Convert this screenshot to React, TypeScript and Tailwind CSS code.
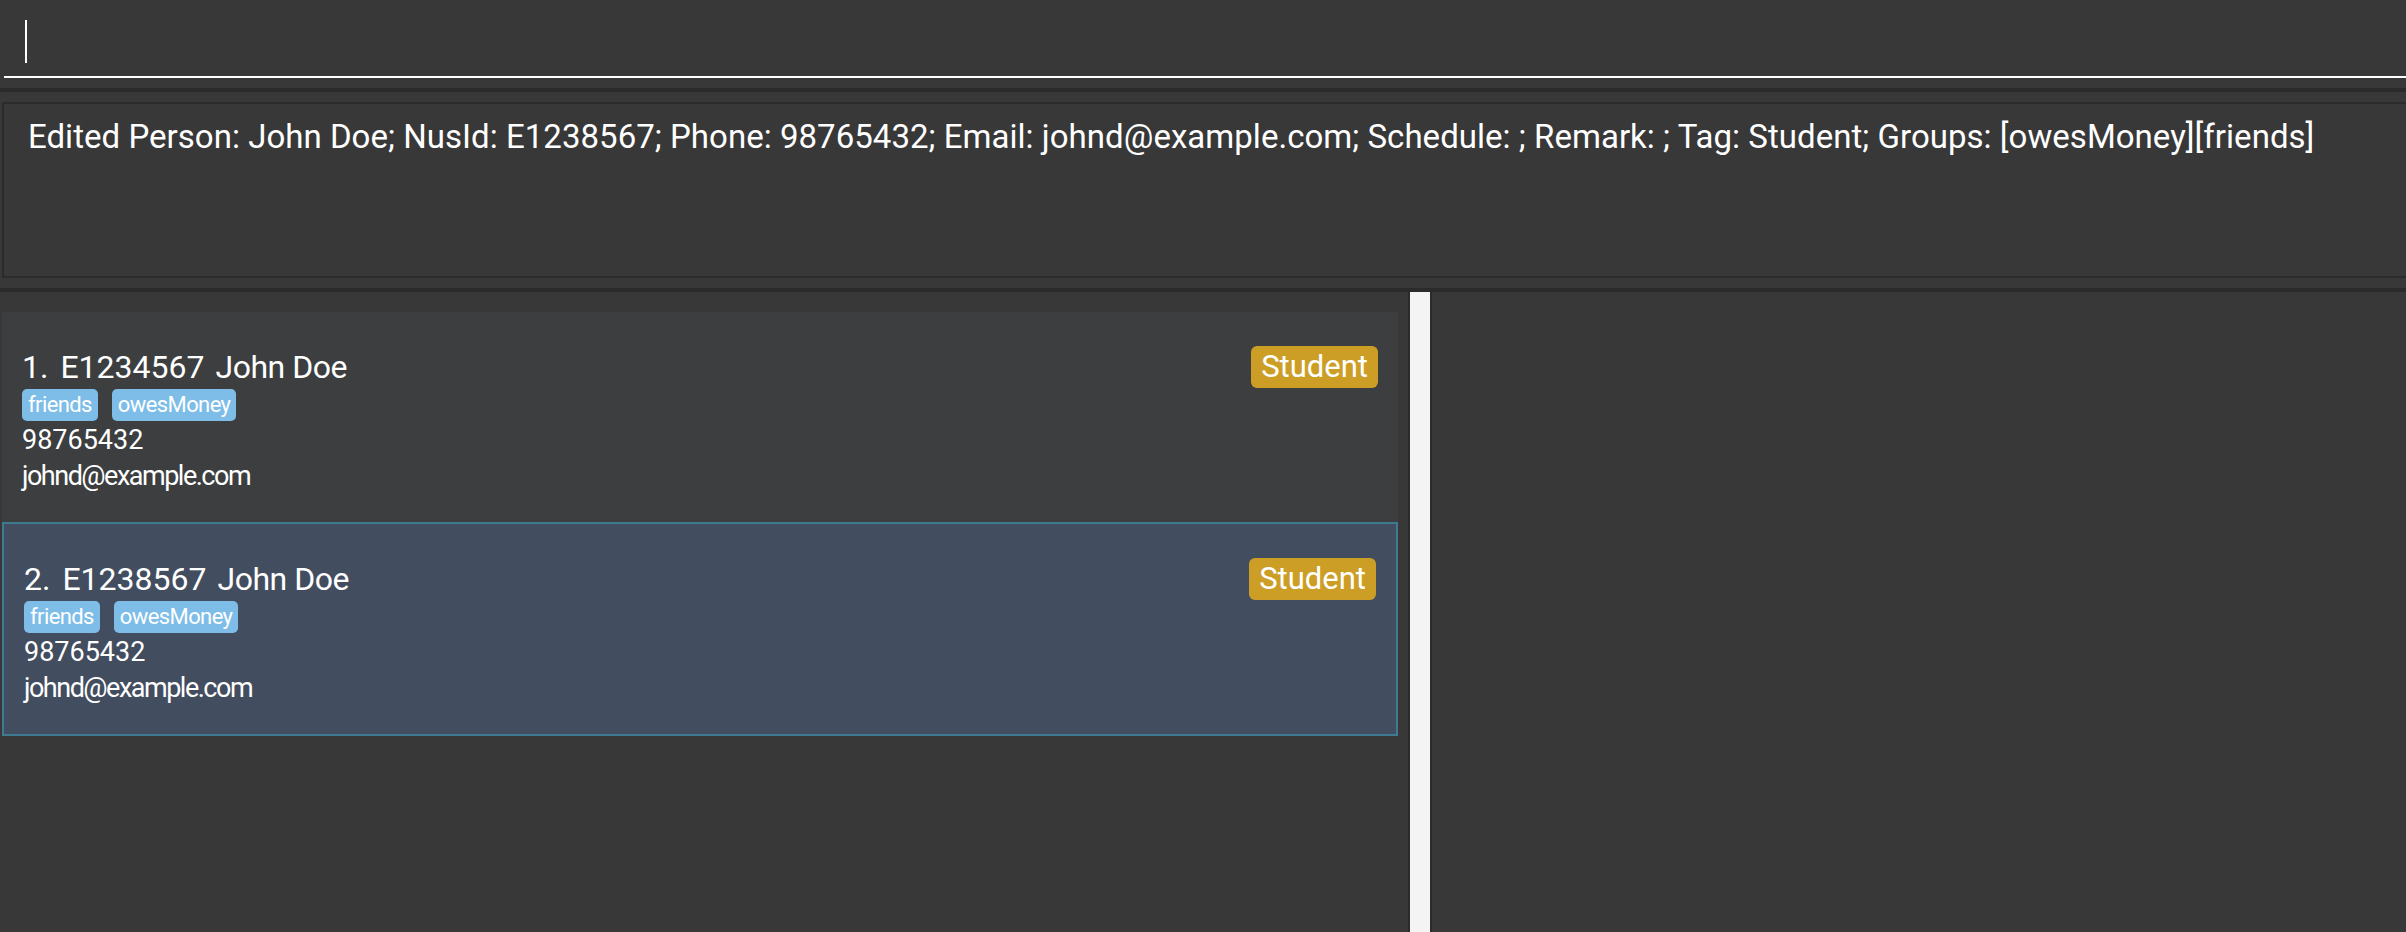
type Person = {
  nusId: string;
  name: string;
  groups: string[];
  phone: string;
  email: string;
  tag: string;
};

const persons: Person[] = [
  {
    nusId: "E1234567",
    name: "John Doe",
    groups: ["friends", "owesMoney"],
    phone: "98765432",
    email: "johnd@example.com",
    tag: "Student",
  },
  {
    nusId: "E1238567",
    name: "John Doe",
    groups: ["friends", "owesMoney"],
    phone: "98765432",
    email: "johnd@example.com",
    tag: "Student",
  },
];

function PersonCard({
  person,
  index,
  selected,
}: {
  person: Person;
  index: number;
  selected: boolean;
}) {
  return (
    <div
      className={`px-[20px] pt-[34px] ${
        selected
          ? "h-[214px] border-2 border-[#3e7b91] bg-[#424d5f]"
          : "h-[210px] bg-[#3c3e3f]"
      }`}
    >
      <div className="flex h-[42px] items-center justify-between">
        <div className="flex text-[32px] leading-[42px] whitespace-nowrap">
          <span>{index}.</span>
          <span className="ml-[12px]">{person.nusId}</span>
          <span className="ml-[11px] tracking-[-0.5px]">{person.name}</span>
        </div>
        <span className="h-[42px] rounded-[6px] bg-[#cc9e26] px-[10px] text-[31px] leading-[42px]">
          {person.tag}
        </span>
      </div>

      <div className="mt-[1px] flex gap-[14px]">
        {person.groups.map((g) => (
          <span
            key={g}
            className="h-[32px] rounded-[5px] bg-[#7dbde8] px-[6px] text-[22px] leading-[32px] tracking-[-0.6px]"
          >
            {g}
          </span>
        ))}
      </div>

      <div className="mt-[1px] text-[27px] leading-[36px]">{person.phone}</div>
      <div className="text-[27px] leading-[36px] tracking-[-1.5px]">
        {person.email}
      </div>
    </div>
  );
}

export default function App() {
  return (
    <div className="flex h-[932px] w-full flex-col overflow-hidden bg-[#383838] font-['Roboto',sans-serif] text-white">
      {/* command box */}
      <div className="h-[88px] shrink-0 pt-[20px] pl-[4px]">
        <div className="h-[58px] border-b-2 border-white pl-[21px]">
          <div className="h-[43px] w-[2px] bg-white" />
        </div>
      </div>

      <div className="h-[4px] shrink-0 bg-[#2b2b2b]" />

      {/* result display */}
      <div className="h-[196px] shrink-0 pt-[10px] pl-[2px]">
        <div className="h-[176px] border-y-2 border-l-2 border-[#2b2b2b] pt-[13px] pl-[24px]">
          <p className="text-[33px] leading-[40px] tracking-[0.03px] whitespace-nowrap">
            Edited Person: John Doe; NusId: E1238567; Phone: 98765432; Email:
            johnd@example.com; Schedule: ; Remark: ; Tag: Student; Groups:
            [owesMoney][friends]
          </p>
        </div>
      </div>

      <div className="h-[4px] shrink-0 bg-[#2b2b2b]" />

      {/* list + detail */}
      <div className="flex min-h-0 flex-1">
        <div className="w-[1408px] shrink-0 pt-[20px] pr-[10px] pl-[2px]">
          {persons.map((p, i) => (
            <PersonCard key={i} person={p} index={i + 1} selected={i === 1} />
          ))}
        </div>
        <div className="w-[2px] shrink-0 bg-[#2b2b2b]" />
        <div className="w-[20px] shrink-0 bg-[#f4f4f4]" />
        <div className="w-[2px] shrink-0 bg-[#2b2b2b]" />
        <div className="flex-1" />
      </div>
    </div>
  );
}
